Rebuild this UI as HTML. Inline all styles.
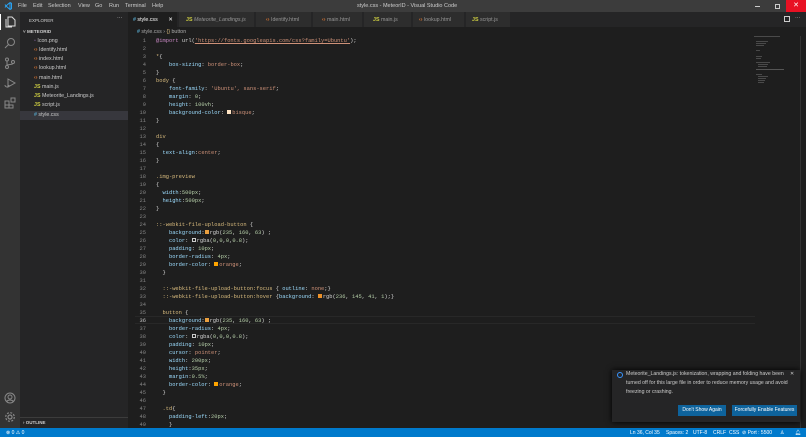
<!DOCTYPE html>
<html><head><meta charset="utf-8"><style>
*{margin:0;padding:0;box-sizing:border-box}
body{width:806px;height:437px;overflow:hidden;background:#1e1e1e;font-family:"Liberation Sans",sans-serif;position:relative}
.abs{position:absolute}
#title{left:0;top:0;width:806px;height:12px;background:#3c3c3c;color:#ccc;font-size:5.5px}
#title span{position:absolute;top:3px}
#act{left:0;top:12px;width:20px;height:416px;background:#333}
#side{left:20px;top:12px;width:108px;height:416px;background:#252526;color:#ccc;font-size:5.3px}
#side .f{position:absolute;left:14px}
#tabs{left:128px;top:12px;width:678px;height:15px;background:#252526;font-size:5.3px;color:#969696}
.tab{position:absolute;top:0;height:15px;background:#2d2d2d;border-right:1px solid #252526;padding-top:5px}
#code{left:128px;top:36px;width:678px;font-family:"Liberation Mono",monospace;font-size:5.4px}
.ln{position:absolute;left:0;width:18px;text-align:right;color:#858585}
.cl{position:absolute;left:28px;color:#d4d4d4;white-space:pre}
.p{color:#9cdcfe}.v{color:#ce9178}.s{color:#d7ba7d}.n{color:#b5cea8}.k{color:#c586c0}
.sw{display:inline-block;width:4px;height:4px;vertical-align:-0.3px;margin-right:1px}
#status{left:0;top:428px;width:806px;height:9px;background:#007acc;color:#fff;font-size:5px}
#status span{position:absolute;top:2px}
#notif{left:612px;top:370px;width:188px;height:52px;background:#252526;box-shadow:0 0 6px #000;color:#ccc;font-size:5.2px;line-height:9px}
.btn{position:absolute;top:35px;height:11px;background:#0e639c;color:#fff;font-size:5px;text-align:center;line-height:11px}
.mm{position:absolute;height:1px;background:#4a4a4a}
</style></head><body>
<div id="title" class="abs">
<svg class="abs" style="left:4px;top:2px" width="8" height="8" viewBox="0 0 8 8"><path d="M6 0.5L2 4 6 7.5V0.5M6 0.5L7.5 1.3V6.7L6 7.5M1 2.5L2 4 1 5.5" stroke="#2aa1f0" stroke-width="1" fill="none"/></svg>
<span style="left:18px">File</span><span style="left:33px">Edit</span><span style="left:48px">Selection</span><span style="left:78px">View</span><span style="left:95px">Go</span><span style="left:109px">Run</span><span style="left:125px">Terminal</span><span style="left:152px">Help</span>
<span style="left:357px">style.css - MeteorID - Visual Studio Code</span>
<div class="abs" style="left:755px;top:6px;width:5px;height:1px;background:#ccc"></div>
<div class="abs" style="left:775px;top:4px;width:5px;height:5px;border:1px solid #ccc"></div>
<div class="abs" style="left:786px;top:0;width:20px;height:12px;background:#e81123;color:#fff;text-align:center;font-size:7px;line-height:12px">✕</div>
</div>
<div id="act" class="abs">
<div class="abs" style="left:0;top:2px;width:1px;height:16px;background:#fff"></div>
<svg class="abs" style="left:4px;top:4px" width="12" height="12" viewBox="0 0 12 12" fill="none" stroke="#ddd" stroke-width="1"><path d="M4 1h4l3 3v6H4zM2 3v8h6"/></svg>
<svg class="abs" style="left:4px;top:25px" width="12" height="12" viewBox="0 0 12 12" fill="none" stroke="#888" stroke-width="1"><circle cx="7" cy="5" r="3.5"/><path d="M4.5 7.5L1 11"/></svg>
<svg class="abs" style="left:4px;top:45px" width="12" height="12" viewBox="0 0 12 12" fill="none" stroke="#888" stroke-width="1"><circle cx="3" cy="2.5" r="1.5"/><circle cx="3" cy="10" r="1.5"/><circle cx="9" cy="5" r="1.5"/><path d="M3 4v4.5M9 6.5C9 8 3 7 3 8.5"/></svg>
<svg class="abs" style="left:4px;top:65px" width="12" height="12" viewBox="0 0 12 12" fill="none" stroke="#888" stroke-width="1"><path d="M4 2l7 4-7 4zM1 8a2 2 0 104 0"/></svg>
<svg class="abs" style="left:4px;top:85px" width="12" height="12" viewBox="0 0 12 12" fill="none" stroke="#888" stroke-width="1"><path d="M1 4h4v4H1zM1 8h4v3H1zM5 8h4v3H5zM7 1h4v4H7z"/></svg>
<svg class="abs" style="left:4px;top:380px" width="12" height="12" viewBox="0 0 12 12" fill="none" stroke="#888" stroke-width="1"><circle cx="6" cy="6" r="5"/><circle cx="6" cy="5" r="2"/><path d="M2.5 9.5c2-2 5-2 7 0"/></svg>
<svg class="abs" style="left:4px;top:399px" width="12" height="12" viewBox="0 0 12 12" fill="none" stroke="#888" stroke-width="1.2"><circle cx="6" cy="6" r="2"/><circle cx="6" cy="6" r="4.3" stroke-dasharray="2 1.4"/></svg>
</div>
<div id="side" class="abs">
<span class="abs" style="left:9px;top:6px;font-size:4.5px">EXPLORER</span><span class="abs" style="left:97px;top:3px">···</span>
<span class="abs" style="left:3px;top:17px;font-size:4.6px;font-weight:bold">˅ METEORID</span>
<div class="abs" style="left:0;top:99px;width:108px;height:9px;background:#37373d"></div>
<span class="f" style="top:26px"><b style="color:#a074c4">▫</b> Icon.png</span>
<span class="f" style="top:35px"><b style="color:#e37933">‹›</b> Identify.html</span>
<span class="f" style="top:44px"><b style="color:#e37933">‹›</b> index.html</span>
<span class="f" style="top:53px"><b style="color:#e37933">‹›</b> lookup.html</span>
<span class="f" style="top:63px"><b style="color:#e37933">‹›</b> main.html</span>
<span class="f" style="top:72px"><b style="color:#cbcb41">JS</b> main.js</span>
<span class="f" style="top:81px"><b style="color:#cbcb41">JS</b> Meteorite_Landings.js</span>
<span class="f" style="top:90px"><b style="color:#cbcb41">JS</b> script.js</span>
<span class="f" style="top:100px"><b style="color:#519aba">#</b> style.css</span>
<div class="abs" style="left:0;top:405px;width:108px;height:1px;background:#3c3c3c"></div>
<span class="abs" style="left:3px;top:408px;font-size:4.5px;font-weight:bold">› OUTLINE</span>
</div>
<div id="tabs" class="abs">
<div class="tab" style="left:0;width:50px;background:#1e1e1e;color:#fff;padding-left:5px"><b style="color:#519aba">#</b> style.css <span style="margin-left:9px">✕</span></div>
<div class="tab" style="left:51px;width:76px;padding-left:7px"><b style="color:#cbcb41">JS</b> <i>Meteorite_Landings.js</i></div>
<div class="tab" style="left:128px;width:56px;padding-left:10px"><b style="color:#e37933">‹›</b> Identify.html</div>
<div class="tab" style="left:185px;width:50px;padding-left:9px"><b style="color:#e37933">‹›</b> main.html</div>
<div class="tab" style="left:236px;width:48px;padding-left:9px"><b style="color:#cbcb41">JS</b> main.js</div>
<div class="tab" style="left:285px;width:52px;padding-left:6px"><b style="color:#e37933">‹›</b> lookup.html</div>
<div class="tab" style="left:338px;width:45px;padding-left:6px"><b style="color:#cbcb41">JS</b> script.js</div>
<div class="abs" style="left:656px;top:4px;width:6px;height:6px;border:1px solid #ccc"></div>
<span class="abs" style="left:667px;top:3px;color:#ccc">···</span>
</div>
<span class="abs" style="left:137px;top:29px;font-size:5.3px;color:#aaa"><b style="color:#519aba">#</b> style.css › <span style="color:#d7ba7d">{}</span> button</span>
<div class="abs" style="left:135px;top:316px;width:620px;height:8px;border-top:1px solid #282828;border-bottom:1px solid #282828"></div>
<div class="abs" style="left:754px;top:36px;width:30px;height:50px">
<div class="mm" style="left:0;top:0;width:26px"></div>
<div class="mm" style="left:2px;top:5px;width:12px"></div><div class="mm" style="left:2px;top:7px;width:10px"></div><div class="mm" style="left:2px;top:9px;width:8px"></div>
<div class="mm" style="left:2px;top:14px;width:4px"></div>
<div class="mm" style="left:2px;top:20px;width:6px"></div><div class="mm" style="left:2px;top:22px;width:5px"></div>
<div class="mm" style="left:2px;top:26px;width:14px"></div><div class="mm" style="left:4px;top:28px;width:10px"></div><div class="mm" style="left:4px;top:30px;width:9px"></div>
<div class="mm" style="left:2px;top:33px;width:28px;background:#555"></div>
<div class="mm" style="left:2px;top:38px;width:6px"></div><div class="mm" style="left:4px;top:40px;width:10px"></div><div class="mm" style="left:4px;top:42px;width:8px"></div><div class="mm" style="left:4px;top:44px;width:7px"></div><div class="mm" style="left:4px;top:46px;width:6px"></div>
</div>
<div class="abs" style="left:800px;top:36px;width:1px;height:392px;background:#333"></div>
<div id="code" class="abs">
<div class="ln" style="top:2px">1</div><div class="cl" style="top:2px"><span class="k">@import</span> url(<span class="v" style="text-decoration:underline">'https://fonts.googleapis.com/css?family=Ubuntu'</span>);</div>
<div class="ln" style="top:10px">2</div>
<div class="ln" style="top:18px">3</div><div class="cl" style="top:18px"><span class="s">*</span>{</div>
<div class="ln" style="top:26px">4</div><div class="cl" style="top:26px">    <span class="p">box-sizing</span>: <span class="v">border-box</span>;</div>
<div class="ln" style="top:34px">5</div><div class="cl" style="top:34px">}</div>
<div class="ln" style="top:42px">6</div><div class="cl" style="top:42px"><span class="s">body</span> {</div>
<div class="ln" style="top:50px">7</div><div class="cl" style="top:50px">    <span class="p">font-family</span>: <span class="v">'Ubuntu', sans-serif</span>;</div>
<div class="ln" style="top:58px">8</div><div class="cl" style="top:58px">    <span class="p">margin</span>: <span class="n">0</span>;</div>
<div class="ln" style="top:66px">9</div><div class="cl" style="top:66px">    <span class="p">height</span>: <span class="n">100vh</span>;</div>
<div class="ln" style="top:74px">10</div><div class="cl" style="top:74px">    <span class="p">background-color</span>: <i class="sw" style="background:bisque"></i><span class="v">bisque</span>;</div>
<div class="ln" style="top:82px">11</div><div class="cl" style="top:82px">}</div>
<div class="ln" style="top:90px">12</div>
<div class="ln" style="top:98px">13</div><div class="cl" style="top:98px"><span class="s">div</span></div>
<div class="ln" style="top:106px">14</div><div class="cl" style="top:106px">{</div>
<div class="ln" style="top:114px">15</div><div class="cl" style="top:114px">  <span class="p">text-align</span>:<span class="v">center</span>;</div>
<div class="ln" style="top:122px">16</div><div class="cl" style="top:122px">}</div>
<div class="ln" style="top:130px">17</div>
<div class="ln" style="top:138px">18</div><div class="cl" style="top:138px"><span class="s">.img-preview</span></div>
<div class="ln" style="top:146px">19</div><div class="cl" style="top:146px">{</div>
<div class="ln" style="top:154px">20</div><div class="cl" style="top:154px">  <span class="p">width</span>:<span class="n">500px</span>;</div>
<div class="ln" style="top:162px">21</div><div class="cl" style="top:162px">  <span class="p">height</span>:<span class="n">500px</span>;</div>
<div class="ln" style="top:170px">22</div><div class="cl" style="top:170px">}</div>
<div class="ln" style="top:178px">23</div>
<div class="ln" style="top:186px">24</div><div class="cl" style="top:186px"><span class="s">::-webkit-file-upload-button</span> {</div>
<div class="ln" style="top:194px">25</div><div class="cl" style="top:194px">    <span class="p">background</span>:<i class="sw" style="background:rgb(235,160,63)"></i>rgb(<span class="n">235</span>, <span class="n">160</span>, <span class="n">63</span>) ;</div>
<div class="ln" style="top:202px">26</div><div class="cl" style="top:202px">    <span class="p">color</span>: <i class="sw" style="border:0.6px solid #ccc"></i>rgba(<span class="n">0</span>,<span class="n">0</span>,<span class="n">0</span>,<span class="n">0.8</span>);</div>
<div class="ln" style="top:210px">27</div><div class="cl" style="top:210px">    <span class="p">padding</span>: <span class="n">10px</span>;</div>
<div class="ln" style="top:218px">28</div><div class="cl" style="top:218px">    <span class="p">border-radius</span>: <span class="n">4px</span>;</div>
<div class="ln" style="top:226px">29</div><div class="cl" style="top:226px">    <span class="p">border-color</span>: <i class="sw" style="background:orange"></i><span class="v">orange</span>;</div>
<div class="ln" style="top:234px">30</div><div class="cl" style="top:234px">  }</div>
<div class="ln" style="top:242px">31</div>
<div class="ln" style="top:250px">32</div><div class="cl" style="top:250px">  <span class="s">::-webkit-file-upload-button:focus</span> { <span class="p">outline</span>: <span class="v">none</span>;}</div>
<div class="ln" style="top:258px">33</div><div class="cl" style="top:258px">  <span class="s">::-webkit-file-upload-button:hover</span> {<span class="p">background</span>: <i class="sw" style="background:rgb(236,145,41)"></i>rgb(<span class="n">236</span>, <span class="n">145</span>, <span class="n">41</span>, <span class="n">1</span>);}</div>
<div class="ln" style="top:266px">34</div>
<div class="ln" style="top:274px">35</div><div class="cl" style="top:274px">  <span class="s">button</span> {</div>
<div class="ln" style="top:282px;color:#c6c6c6">36</div><div class="cl" style="top:282px">    <span class="p">background</span>:<i class="sw" style="background:rgb(235,160,63)"></i>rgb(<span class="n">235</span>, <span class="n">160</span>, <span class="n">63</span>) ;</div>
<div class="ln" style="top:290px">37</div><div class="cl" style="top:290px">    <span class="p">border-radius</span>: <span class="n">4px</span>;</div>
<div class="ln" style="top:298px">38</div><div class="cl" style="top:298px">    <span class="p">color</span>: <i class="sw" style="border:0.6px solid #ccc"></i>rgba(<span class="n">0</span>,<span class="n">0</span>,<span class="n">0</span>,<span class="n">0.8</span>);</div>
<div class="ln" style="top:306px">39</div><div class="cl" style="top:306px">    <span class="p">padding</span>: <span class="n">10px</span>;</div>
<div class="ln" style="top:314px">40</div><div class="cl" style="top:314px">    <span class="p">cursor</span>: <span class="v">pointer</span>;</div>
<div class="ln" style="top:322px">41</div><div class="cl" style="top:322px">    <span class="p">width</span>: <span class="n">200px</span>;</div>
<div class="ln" style="top:330px">42</div><div class="cl" style="top:330px">    <span class="p">height</span>:<span class="n">35px</span>;</div>
<div class="ln" style="top:338px">43</div><div class="cl" style="top:338px">    <span class="p">margin</span>:<span class="n">0.5%</span>;</div>
<div class="ln" style="top:346px">44</div><div class="cl" style="top:346px">    <span class="p">border-color</span>: <i class="sw" style="background:orange"></i><span class="v">orange</span>;</div>
<div class="ln" style="top:354px">45</div><div class="cl" style="top:354px">  }</div>
<div class="ln" style="top:362px">46</div>
<div class="ln" style="top:370px">47</div><div class="cl" style="top:370px">  <span class="s">.td</span>{</div>
<div class="ln" style="top:378px">48</div><div class="cl" style="top:378px">    <span class="p">padding-left</span>:<span class="n">20px</span>;</div>
<div class="ln" style="top:386px">49</div><div class="cl" style="top:386px">    }</div>
</div>
<div id="notif" class="abs">
<span class="abs" style="left:5px;top:2px;width:6px;height:6px;border:1px solid #3794ff;border-radius:50%"></span>
<div class="abs" style="left:14px;top:0;width:165px">Meteorite_Landings.js: tokenization, wrapping and folding have been turned off for this large file in order to reduce memory usage and avoid freezing or crashing.</div>
<span class="abs" style="left:178px;top:0">✕</span>
<div class="btn" style="left:66px;width:48px">Don't Show Again</div>
<div class="btn" style="left:120px;width:65px">Forcefully Enable Features</div>
</div>
<div id="status" class="abs">
<span style="left:6px">⊗ 0 ⚠ 0</span>
<span style="left:630px">Ln 36, Col 35</span><span style="left:666px">Spaces: 2</span><span style="left:693px">UTF-8</span><span style="left:713px">CRLF</span><span style="left:729px">CSS</span><span style="left:742px">⊘ Port : 5500</span><span style="left:780px">♙</span><span style="left:795px">🔔︎</span>
</div>
</body></html>
